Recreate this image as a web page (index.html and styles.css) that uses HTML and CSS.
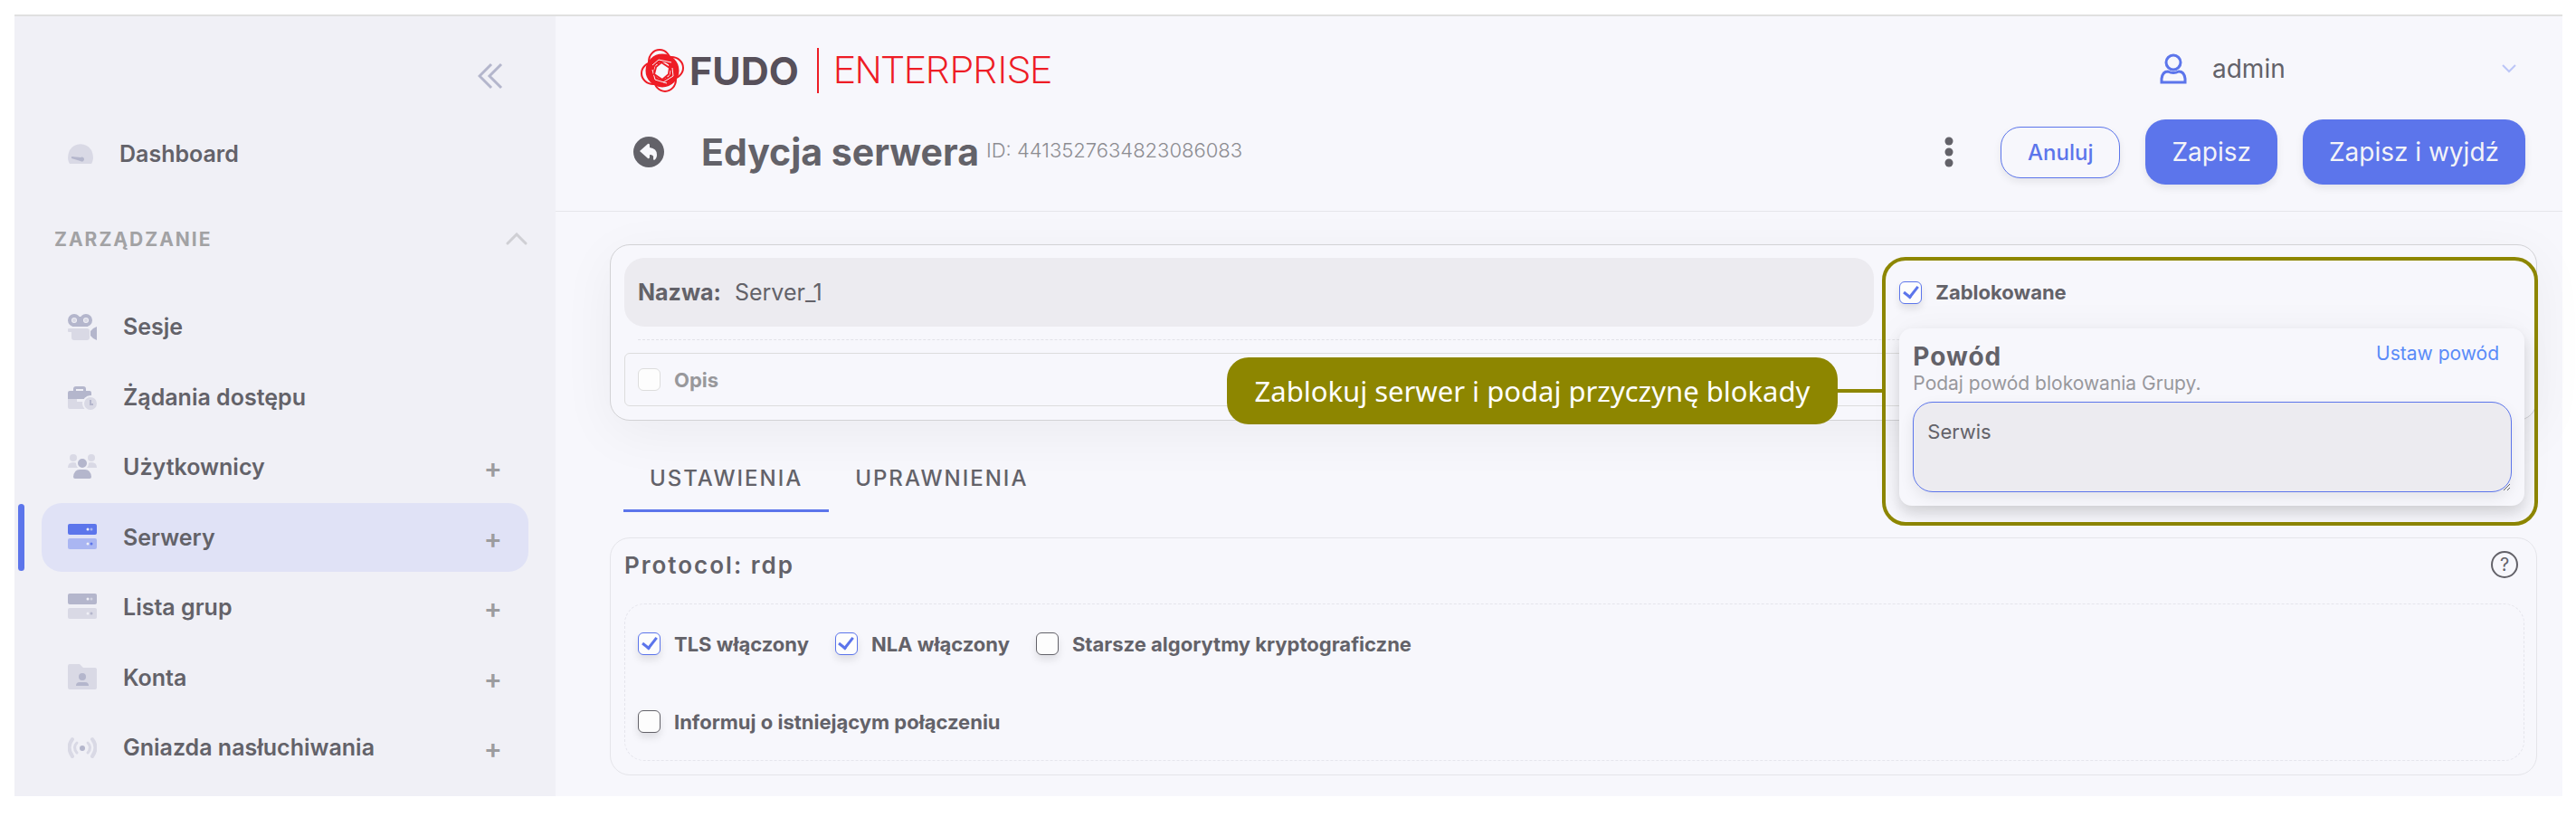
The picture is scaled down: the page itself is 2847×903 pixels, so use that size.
FILE: index.html
```html
<!DOCTYPE html>
<html lang="pl">
<head>
  <meta charset="UTF-8">
  <meta name="viewport" content="width=device-width, initial-scale=1">
  <title>Fudo Enterprise - Edycja serwera</title>
  <link rel="stylesheet" href="styles.css">
</head>
<body>
  <div class="app">
    <aside class="sidebar">
      <button class="collapse" type="button" aria-label="Zwiń menu">
        <svg width="28" height="30" viewBox="0 0 28 30"><path d="M15 2 2 15l13 13M26 2 13 15l13 13"/></svg>
      </button>

      <div class="nav-item">
        <a href="#">
          <svg width="28" height="24" viewBox="0 0 28 24"><path class="light" d="M2 23C-1 19 0 12 2 8a14 14 0 0 1 24 0c2 4 3 11 0 15z"/><path class="dark" d="m4 15 10 1a2.5 2.5 0 1 1 0 4L4 17z"/></svg>
          Dashboard
        </a>
      </div>

      <button class="section" type="button">
        Zarządzanie
        <svg width="24" height="14" viewBox="0 0 24 14"><path d="M2 12 12 2l10 10"/></svg>
      </button>

      <nav class="nav-list">
        <div class="nav-item">
          <a href="#">
            <svg width="32" height="32" viewBox="0 0 32 32"><rect class="light" y="18" width="8" height="4" rx="1"/><rect class="light" x="4" y="18" width="20" height="13" rx="3"/><path class="dark" d="M32 16v15l-4-2-3-3v-5l3-3z"/><circle class="ring" cx="7" cy="9" r="5"/><circle class="ring" cx="20" cy="9" r="5"/><path class="dark" d="M5 14h17v2H5zM11 5h5v9h-5z"/><circle class="light" cx="7" cy="9" r="2"/><circle class="light" cx="20" cy="9" r="2"/></svg>
            Sesje
          </a>
        </div>
        <div class="nav-item">
          <a href="#">
            <svg width="32" height="32" viewBox="0 0 32 32"><path class="light" d="M0 18h10v3h8v-3h7v11H2q-2 0-2-2z"/><path class="dark" fill-rule="evenodd" d="M2 9h4V7q0-3 3-3h8q3 0 3 3v2h4q2 0 2 2v7H0v-7q0-2 2-2zm7 0h8V7H9z"/><circle class="light outlined" cx="25" cy="23" r="8"/><path class="hands" d="M25 19v5h3"/></svg>
            Żądania dostępu
          </a>
        </div>
        <div class="nav-item">
          <a href="#">
            <svg width="32" height="32" viewBox="0 0 32 32"><circle class="light" cx="6" cy="6" r="4"/><circle class="light" cx="26" cy="6" r="4"/><path class="light" d="M0 17q0-6 6-6 4 0 5 3v3zM32 17q0-6-6-6-4 0-5 3v3z"/><circle class="dark outlined" cx="16" cy="12" r="6"/><path class="dark" d="M6 27q1-8 7-8h6q6 0 7 8 0 2-2 2H8q-2 0-2-2z"/></svg>
            Użytkownicy
          </a>
          <button class="add" type="button" aria-label="Dodaj użytkownika">+</button>
        </div>
        <div class="nav-item active">
          <a href="#">
            <svg width="32" height="32" viewBox="0 0 32 32"><rect class="dark" y="1" width="32" height="12" rx="2"/><rect class="light" y="17" width="32" height="12" rx="2"/><circle class="dot" cx="22" cy="7" r="1.5"/><circle class="dot faint" cx="26" cy="7" r="1.5"/><circle class="dot" cx="22" cy="23" r="1.5"/><circle class="dark" cx="26" cy="23" r="1.5"/></svg>
            Serwery
          </a>
          <button class="add" type="button" aria-label="Dodaj serwer">+</button>
        </div>
        <div class="nav-item">
          <a href="#">
            <svg width="32" height="32" viewBox="0 0 32 32"><rect class="dark" y="1" width="32" height="12" rx="2"/><rect class="light" y="17" width="32" height="12" rx="2"/><circle class="dot" cx="22" cy="7" r="1.5"/><circle class="dot faint" cx="26" cy="7" r="1.5"/><circle class="dot" cx="22" cy="23" r="1.5"/><circle class="dark" cx="26" cy="23" r="1.5"/></svg>
            Lista grup
          </a>
          <button class="add" type="button" aria-label="Dodaj grupę">+</button>
        </div>
        <div class="nav-item">
          <a href="#">
            <svg width="32" height="32" viewBox="0 0 32 32"><path class="light" d="M2 1h11l4 4h13q2 0 2 2v20q0 2-2 2H2q-2 0-2-2V3q0-2 2-2z"/><circle class="dark" cx="16" cy="15" r="4"/><path class="dark" d="M9 25q0-4 4-4h6q4 0 4 4z"/></svg>
            Konta
          </a>
          <button class="add" type="button" aria-label="Dodaj konto">+</button>
        </div>
        <div class="nav-item">
          <a href="#">
            <svg width="32" height="32" viewBox="0 0 32 32"><path class="waves" d="M5 7q-7 9 0 19M27 7q7 9 0 19"/><path class="waves thin" d="M10 11q-5 5 0 11M22 11q5 5 0 11"/><circle class="dark" cx="16" cy="17" r="3"/></svg>
            Gniazda nasłuchiwania
          </a>
          <button class="add" type="button" aria-label="Dodaj gniazdo">+</button>
        </div>
      </nav>
    </aside>

    <main class="main">
      <header class="header">
        <div class="topbar">
          <div class="logo">
            <svg width="50" height="50" viewBox="0 0 50 50">
              <g class="loops">
                <ellipse cx="22" cy="15" rx="12" ry="13"/>
                <ellipse cx="22" cy="15" rx="12" ry="13" transform="rotate(90 25 25)"/>
                <ellipse cx="22" cy="15" rx="12" ry="13" transform="rotate(180 25 25)"/>
                <ellipse cx="22" cy="15" rx="12" ry="13" transform="rotate(270 25 25)"/>
              </g>
              <circle class="band" cx="25" cy="25" r="14"/>
              <path class="cuts" d="m14 19 7-6 14 3M36 22l1 9-11 7M30 39l-13-4-3-11"/>
              <path class="core" d="m24 16 9 6-1 7-7 6-9-6 2-8z"/>
            </svg>
            <span class="logo-name">FUDO</span>
            <span class="logo-edition">ENTERPRISE</span>
          </div>
          <button class="user" type="button">
            <svg width="30" height="34" viewBox="0 0 30 34"><ellipse cx="15" cy="10" rx="8" ry="8"/><path d="M2 32v-4q1-8 7-8 6 3 12 0 6 0 7 8v4z"/></svg>
            <span>admin</span>
            <svg class="caret" width="16" height="10" viewBox="0 0 16 10"><path d="m1 1 7 7 7-7"/></svg>
          </button>
        </div>

        <div class="titlebar">
          <a class="back" href="#" aria-label="Wróć">
            <svg width="34" height="34" viewBox="0 0 34 34"><circle cx="17" cy="17" r="17"/><path d="m7 16 9-8q2-1 2 2v2q8 1 8 8 0 4-3 6-1 0-1-2 1-4-4-4v2q0 3-2 2z"/></svg>
          </a>
          <h1>Edycja serwera</h1>
          <span class="object-id">ID: 4413527634823086083</span>
          <div class="actions">
            <button class="more" type="button" aria-label="Więcej">
              <svg width="10" height="34" viewBox="0 0 10 34"><circle cx="5" cy="5" r="4.5"/><circle cx="5" cy="17" r="4.5"/><circle cx="5" cy="29" r="4.5"/></svg>
            </button>
            <button class="btn btn-outline" type="button">Anuluj</button>
            <button class="btn" type="button">Zapisz</button>
            <button class="btn" type="button">Zapisz i wyjdź</button>
          </div>
        </div>
      </header>

      <div class="content">
        <section class="card general">
          <div class="general-row">
            <div class="field">
              <label for="name">Nazwa:</label>
              <input id="name" type="text" value="Server_1">
            </div>
            <div class="blocked">
              <label class="check"><input type="checkbox" checked> Zablokowane</label>
              <div class="highlight">
                <div class="note">Zablokuj serwer i podaj przyczynę blokady</div>
                <div class="reason">
                  <div class="reason-head">
                    <label for="reason">Powód</label>
                    <a href="#">Ustaw powód</a>
                  </div>
                  <p>Podaj powód blokowania Grupy.</p>
                  <textarea id="reason">Serwis</textarea>
                </div>
              </div>
            </div>
          </div>
          <div class="description">
            <label class="check muted"><input type="checkbox"> Opis</label>
          </div>
        </section>

        <nav class="tabs">
          <a class="current" href="#">Ustawienia</a>
          <a href="#">Uprawnienia</a>
        </nav>

        <section class="card protocol">
          <div class="card-head">
            <h2>Protocol: rdp</h2>
            <button class="help" type="button" aria-label="Pomoc">?</button>
          </div>
          <div class="options">
            <div class="options-row">
              <label class="check"><input type="checkbox" checked> TLS włączony</label>
              <label class="check"><input type="checkbox" checked> NLA włączony</label>
              <label class="check"><input type="checkbox"> Starsze algorytmy kryptograficzne</label>
            </div>
            <div class="options-row">
              <label class="check"><input type="checkbox"> Informuj o istniejącym połączeniu</label>
            </div>
          </div>
        </section>
      </div>
    </main>
  </div>
</body>
</html>
```

FILE: styles.css
```css
* { box-sizing: border-box; }
body { margin: 0; padding: 16px 15px 23px 16px; min-height: 100vh; display: flex; background: #fff; color: #636269; font-family: Inter, "Liberation Sans", sans-serif; font-size: 22px; }
button, input, textarea { font: inherit; color: inherit; }
button { border: 0; padding: 0; background: none; cursor: pointer; }
a { color: inherit; text-decoration: none; }
h1, h2, p { margin: 0; }
svg { flex: none; display: block; }

.app { flex: 1; display: flex; border-top: 2px solid #e0e0e0; background: #f7f7fc; }

/* sidebar */
.sidebar { flex: none; width: 598px; padding: 51px 30px 16px; display: flex; flex-direction: column; background: #f0f0f6; }
.collapse { align-self: flex-end; margin: 0 28px 33px 0; }
.collapse path { fill: none; stroke: #b4b6cc; stroke-width: 3; }
.nav-item { position: relative; height: 76px; padding: 0 29px; display: flex; align-items: center; justify-content: space-between; border-radius: 22px; font-size: 25px; font-weight: 600; }
.nav-item a { display: flex; align-items: center; gap: 29px; }
.nav-item .dark { fill: #b4b6cc; }
.nav-item .light { fill: #d9d9e5; }
.nav-item .ring { fill: #f0f0f6; stroke: #b4b6cc; stroke-width: 4; }
.nav-item .outlined { stroke: #f0f0f6; stroke-width: 2; }
.nav-item .hands { fill: none; stroke: #b4b6cc; stroke-width: 2; }
.nav-item .dot { fill: #f0f0f6; }
.nav-item .faint { opacity: 0.5; }
.nav-item .waves { fill: none; stroke: #d9d9e5; stroke-width: 4; stroke-linecap: round; }
.nav-item .thin { stroke-width: 3; }
.nav-item.active { background: #e0e2f6; }
.nav-item.active::before { content: ""; position: absolute; left: -26px; top: 1px; bottom: 1px; width: 7px; border-radius: 4px; background: #5c75eb; }
.nav-item.active .dark { fill: #5c75eb; }
.nav-item.active .light { fill: #aab6f2; }
.nav-list { flex: 1; display: flex; flex-direction: column; justify-content: space-between; }
.add { color: #9c9c9f; font-size: 30px; font-weight: 600; line-height: 30px; padding-top: 2px; }
.section { height: 112px; margin-bottom: 3px; padding: 0 1px 0 14px; display: flex; align-items: center; justify-content: space-between; color: #a2a2a4; font-size: 21px; font-weight: 700; letter-spacing: 2px; text-transform: uppercase; }
.section path { fill: none; stroke: #cfcfd4; stroke-width: 3; stroke-linecap: round; }

/* header */
.main { flex: 1; min-width: 0; }
.header { padding: 35px 41px 29px 86px; border-bottom: 1px solid #e5e5ea; }
.topbar { display: flex; align-items: center; justify-content: space-between; height: 50px; margin-bottom: 29px; }
.logo { display: flex; align-items: center; margin-left: 7px; }
.logo .loops { fill: none; stroke: #ee1c25; stroke-width: 2; }
.logo .band { fill: none; stroke: #ee1c25; stroke-width: 9; }
.logo .cuts { fill: none; stroke: #f7f7fc; stroke-width: 1; }
.logo .core { fill: #f7f7fc; stroke: #ee1c25; stroke-width: 2; }
.logo-name { margin-left: 5px; color: #57505a; font-size: 43px; font-weight: 700; }
.logo-edition { margin-left: 20px; padding-left: 16px; border-left: 2px solid #ee1c25; color: #ee1c25; font-family: Roboto, sans-serif; font-size: 42px; font-weight: 300; line-height: 50px; }
.user { width: 404px; display: flex; align-items: center; gap: 28px; padding: 0 10px 4px 0; font-size: 28px; }
.user svg { fill: none; stroke: #5c75eb; stroke-width: 3; }
.user .caret { margin-left: auto; stroke: #bcc6f7; stroke-width: 2; }
.titlebar { display: flex; align-items: center; height: 72px; }
.back circle { fill: #636269; }
.back path { fill: #f7f7fc; }
h1 { margin: 0 8px 0 41px; font-size: 41px; font-weight: 700; }
.object-id { color: #8c8c91; font-weight: 300; padding-bottom: 4px; }
.actions { margin-left: auto; display: flex; align-items: center; gap: 28px; }
.more { margin-right: 24px; fill: #636269; }
.btn { height: 72px; padding: 0 29px; border-radius: 22px; background: #5c75eb; color: #f3f3f8; font-size: 28px; box-shadow: 0 4px 8px rgba(0, 0, 0, 0.08); }
.btn-outline { height: 57px; border: 1px solid #5c75eb; background: #f7f7fc; color: #5c75eb; font-size: 24px; font-weight: 500; }

/* content */
.content { padding: 36px 28px 23px 60px; }
.card { padding: 14px 13px 15px 15px; border: 1px solid #e5e5ea; border-radius: 22px; background: #f7f7fc; }
.general { border-color: #d2d2d5; box-shadow: 0 14px 60px rgba(0, 0, 0, 0.05); }
.general-row { display: grid; grid-template-columns: 2fr 1fr; gap: 28px; position: relative; }
.field { height: 76px; padding: 0 15px; display: flex; align-items: center; gap: 15px; border-radius: 22px; background: #ecebf0; font-size: 25px; }
.field label { font-weight: 700; }
.field input { flex: 1; border: 0; padding: 0; background: none; outline: 0; }
.check { display: flex; align-items: center; gap: 15px; font-weight: 700; }
.check input { appearance: none; flex: none; display: grid; place-items: center; width: 25px; height: 25px; margin: 0; border: 1px solid #636269; border-radius: 6px; background: #fdfdfd; box-shadow: 0 5px 8px rgba(0, 0, 0, 0.1); }
.check input:checked { border-color: #5c75eb; }
.check input:checked::after { content: ""; width: 7px; height: 13px; margin-bottom: 5px; border: solid #5c75eb; border-width: 0 3px 3px 0; transform: rotate(38deg); }
.check.muted { color: #98989b; }
.check.muted input { border-color: #ddd; box-shadow: none; }
.description { margin-top: 14px; position: relative; padding-top: 15px; }
.description::before { content: ""; position: absolute; top: 0; left: 15px; right: 15px; border-top: 1px dashed #e2e2e8; }
.description .check { height: 59px; padding: 0 14px; border: 1px solid #ddd; border-radius: 6px; }

/* blocked checkbox with the reason popup */
.blocked { position: relative; z-index: 1; display: flex; align-items: center; }
.highlight { position: absolute; top: -1px; left: -19px; right: -15px; padding: 75px 11px 18px 15px; border: 4px solid #8d8600; border-radius: 26px; pointer-events: none; }
.note { position: absolute; top: 107px; right: calc(100% + 53px); height: 74px; padding: 0 31px; border-radius: 24px; background: #8d8600; color: #fff; font-family: "Noto Sans", sans-serif; font-size: 31px; line-height: 74px; white-space: nowrap; }
.note::after { content: ""; position: absolute; left: 100%; top: 35px; width: 49px; height: 4px; background: #8d8600; }
.reason { padding: 16px 14px 15px 15px; border-radius: 14px; background: #f7f7fc; box-shadow: 0 8px 16px rgba(0, 0, 0, 0.14), 0 0 40px rgba(0, 0, 0, 0.04); pointer-events: auto; }
.reason-head { display: flex; align-items: flex-start; justify-content: space-between; padding-right: 14px; line-height: 30px; }
.reason-head label { font-size: 28px; font-weight: 700; letter-spacing: 1px; }
.reason-head a { color: #5a8bf8; font-size: 21px; line-height: 24px; }
.reason p { color: #98989d; font-size: 21px; line-height: 30px; }
.reason textarea { display: block; width: 100%; height: 100px; margin-top: 5px; padding: 18px 15px; border: 1px solid #5c75eb; border-radius: 22px; outline: 0; background: #ecebf0; line-height: 28px; box-shadow: 0 6px 16px rgba(0, 0, 0, 0.08); }

/* tabs */
.tabs { display: flex; margin: 30px 0 28px 15px; }
.tabs a { height: 71px; padding: 0 29px; border-bottom: 3px solid transparent; font-size: 24px; font-weight: 500; line-height: 68px; letter-spacing: 2px; text-transform: uppercase; }
.tabs .current { border-color: #5c75eb; }

.card-head { display: flex; align-items: center; justify-content: space-between; height: 30px; padding-right: 7px; }
h2 { font-size: 26px; font-weight: 600; letter-spacing: 2px; }
.help { width: 30px; height: 30px; border: 2px solid #636269; border-radius: 50%; font-size: 20px; line-height: 24px; }
.options { display: flex; flex-direction: column; gap: 61px; margin-top: 28px; padding: 31px 14px 30px; border: 1px dashed #e5e5ec; border-radius: 22px; }
.options-row { display: flex; gap: 29px; height: 25px; }
```
